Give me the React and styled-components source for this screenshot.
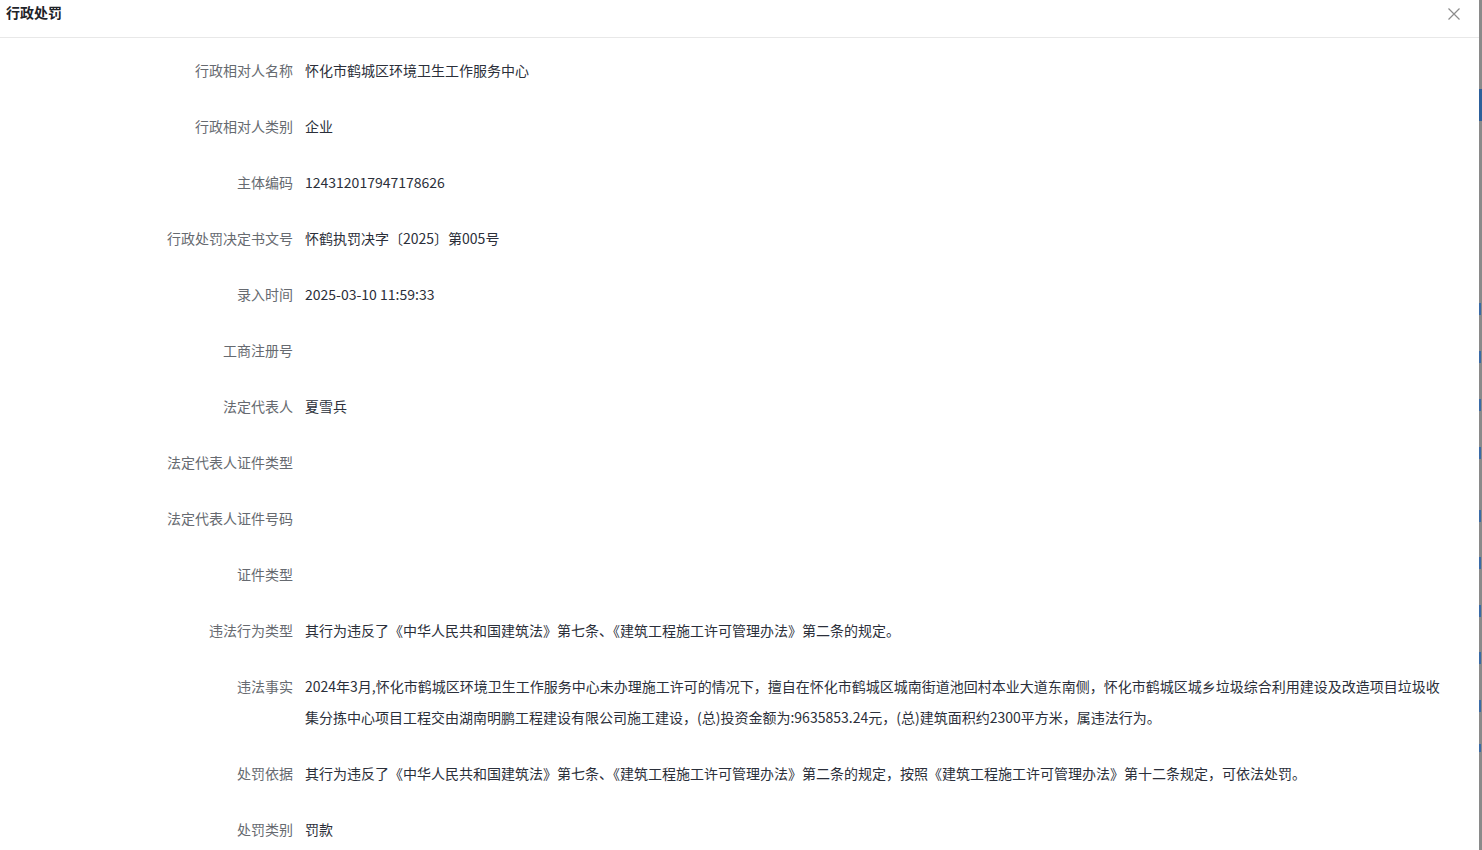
import React from "react";
import styled, { createGlobalStyle } from "styled-components";

const Global = createGlobalStyle`
  html, body { margin: 0; padding: 0; background: #fff; }
  body { font-family: "Noto Sans CJK SC", "Noto Sans", sans-serif; overflow: hidden; }
  #root { height: 850px; }
`;

const Page = styled.div`
  display: flex;
  width: 1482px;
  height: 850px;
  overflow: hidden;
`;

const Dialog = styled.div`
  flex: 1;
  display: flex;
  flex-direction: column;
  background: #fff;
  min-width: 0;
`;

const Edge = styled.div`
  width: 3px;
  flex: none;
  background:
    linear-gradient(#2d5f9a, #2d5f9a) 0 89px / 3px 32px no-repeat,
    linear-gradient(#3b6aa5, #3b6aa5) 0 303px / 2px 12px no-repeat,
    linear-gradient(#3b6aa5, #3b6aa5) 0 351px / 2px 12px no-repeat,
    linear-gradient(#3b6aa5, #3b6aa5) 0 399px / 2px 12px no-repeat,
    linear-gradient(#3b6aa5, #3b6aa5) 0 447px / 2px 12px no-repeat,
    linear-gradient(#3b6aa5, #3b6aa5) 0 510px / 2px 12px no-repeat,
    linear-gradient(#3b6aa5, #3b6aa5) 0 557px / 2px 12px no-repeat,
    linear-gradient(#3b6aa5, #3b6aa5) 0 605px / 2px 12px no-repeat,
    linear-gradient(#3b6aa5, #3b6aa5) 0 652px / 2px 12px no-repeat,
    linear-gradient(#3b6aa5, #3b6aa5) 0 700px / 2px 12px no-repeat,
    linear-gradient(#3b6aa5, #3b6aa5) 0 744px / 2px 8px no-repeat,
    #8a8a8a;
`;

const Header = styled.div`
  display: flex;
  align-items: flex-start;
  justify-content: space-between;
  padding: 2px 18px 15px 6px;
  border-bottom: 1px solid #e8e8e8;
`;

const Title = styled.div`
  font-size: 14px;
  line-height: 20px;
  font-weight: 700;
  color: #1f2329;
`;

const Close = styled.button`
  border: 0;
  background: none;
  padding: 0;
  margin-top: 5px;
  width: 14px;
  height: 14px;
  cursor: pointer;
  display: flex;
`;

const Body = styled.div`
  padding: 17px 32px 0 0;
  display: flex;
  flex-direction: column;
  gap: 25px;
`;

const Row = styled.div`
  display: grid;
  grid-template-columns: 293px 1fr;
  column-gap: 12px;
  font-size: 14px;
  line-height: 31px;
`;

const Label = styled.div`
  text-align: right;
  color: #666a70;
  white-space: nowrap;
`;

const Value = styled.div`
  color: #2b2f3a;
  min-height: 31px;
`;

const rows = [
  ["行政相对人名称", "怀化市鹤城区环境卫生工作服务中心"],
  ["行政相对人类别", "企业"],
  ["主体编码", "124312017947178626"],
  ["行政处罚决定书文号", "怀鹤执罚决字〔2025〕第005号"],
  ["录入时间", "2025-03-10 11:59:33"],
  ["工商注册号", ""],
  ["法定代表人", "夏雪兵"],
  ["法定代表人证件类型", ""],
  ["法定代表人证件号码", ""],
  ["证件类型", ""],
  ["违法行为类型", "其行为违反了《中华人民共和国建筑法》第七条、《建筑工程施工许可管理办法》第二条的规定。"],
  [
    "违法事实",
    "2024年3月,怀化市鹤城区环境卫生工作服务中心未办理施工许可的情况下，擅自在怀化市鹤城区城南街道池回村本业大道东南侧，怀化市鹤城区城乡垃圾综合利用建设及改造项目垃圾收集分拣中心项目工程交由湖南明鹏工程建设有限公司施工建设，(总)投资金额为:9635853.24元，(总)建筑面积约2300平方米，属违法行为。",
  ],
  ["处罚依据", "其行为违反了《中华人民共和国建筑法》第七条、《建筑工程施工许可管理办法》第二条的规定，按照《建筑工程施工许可管理办法》第十二条规定，可依法处罚。"],
  ["处罚类别", "罚款"],
];

export default function App() {
  return (
    <Page>
      <Global />
      <Dialog>
        <Header>
          <Title>行政处罚</Title>
          <Close aria-label="关闭">
            <svg width="14" height="14" viewBox="0 0 14 14">
              <path d="M1.5 1.5 L12.5 12.5 M12.5 1.5 L1.5 12.5" stroke="#8c8c8c" strokeWidth="1.2" fill="none" />
            </svg>
          </Close>
        </Header>
        <Body>
          {rows.map(([k, v]) => (
            <Row key={k}>
              <Label>{k}</Label>
              <Value>{v}</Value>
            </Row>
          ))}
        </Body>
      </Dialog>
      <Edge />
    </Page>
  );
}
